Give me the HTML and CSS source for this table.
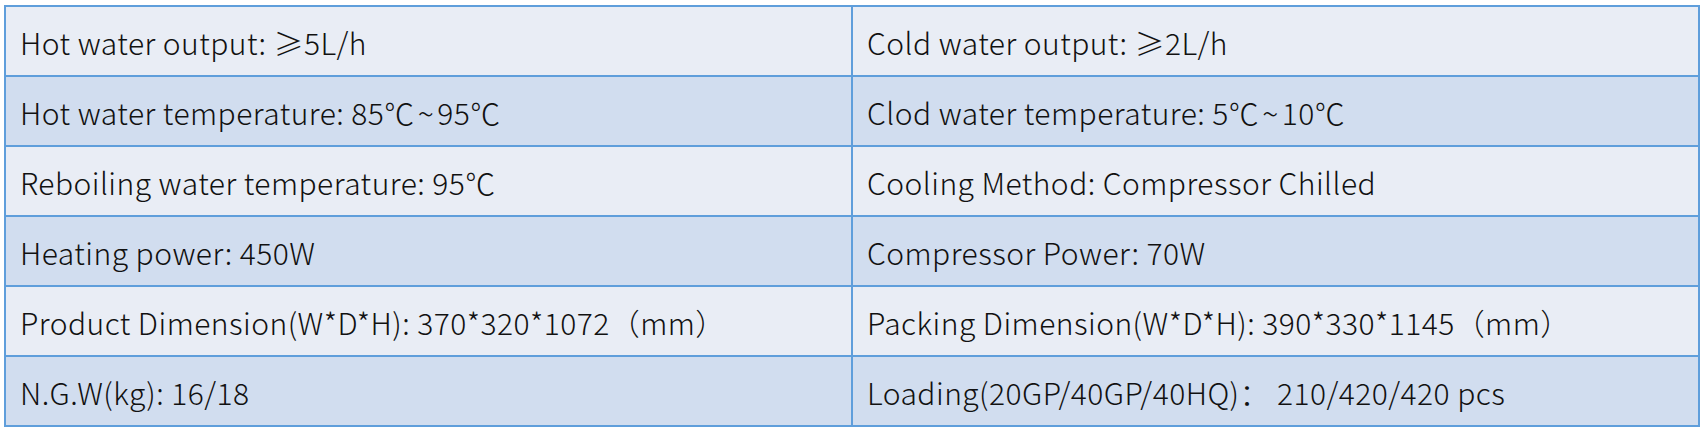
FILE: index.html
```html
<!DOCTYPE html>
<html>
<head>
<meta charset="utf-8">
<link rel="stylesheet" href="styles.css">
</head>
<body>
<div class="wrap">
<table class="spec">
  <tr class="odd"><td>Hot water output: ≥5L/h</td><td>Cold water output: ≥2L/h</td></tr>
  <tr class="even"><td>Hot water temperature: 85℃<span class="tilde">~</span>95℃</td><td>Clod water temperature: 5℃<span class="tilde">~</span>10℃</td></tr>
  <tr class="odd"><td>Reboiling water temperature: 95℃</td><td>Cooling Method: Compressor Chilled</td></tr>
  <tr class="even"><td>Heating power: 450W</td><td>Compressor Power: 70W</td></tr>
  <tr class="odd"><td>Product Dimension(W*D*H): 370*320*1072（mm）</td><td>Packing Dimension(W*D*H): 390*330*1145（mm）</td></tr>
  <tr class="even"><td>N.G.W(kg): 16/18</td><td>Loading(20GP/40GP/40HQ)： 210/420/420 pcs</td></tr>
</table>
</div>
</body>
</html>
```

FILE: styles.css
```css
html, body {
  margin: 0;
  padding: 0;
  background: #ffffff;
}
.wrap {
  padding: 5px 3px 0 4px;
}
.spec {
  width: 1696px;
  border-collapse: collapse;
  table-layout: fixed;
  font-family: "Noto Sans CJK SC", "Noto Sans", sans-serif;
  font-weight: 300;
  font-size: 30px;
  letter-spacing: 0.45px;
  color: #111111;
}
.spec td {
  border: 2px solid #5f9edb;
  height: 66px;
  padding: 2px 14px 0;
  vertical-align: middle;
  white-space: nowrap;
  line-height: 1;
}
.spec tr.odd td {
  background: #e9edf5;
}
.spec tr.even td {
  background: #d1ddef;
}
.tilde {
  margin: 0 3px;
}
```
